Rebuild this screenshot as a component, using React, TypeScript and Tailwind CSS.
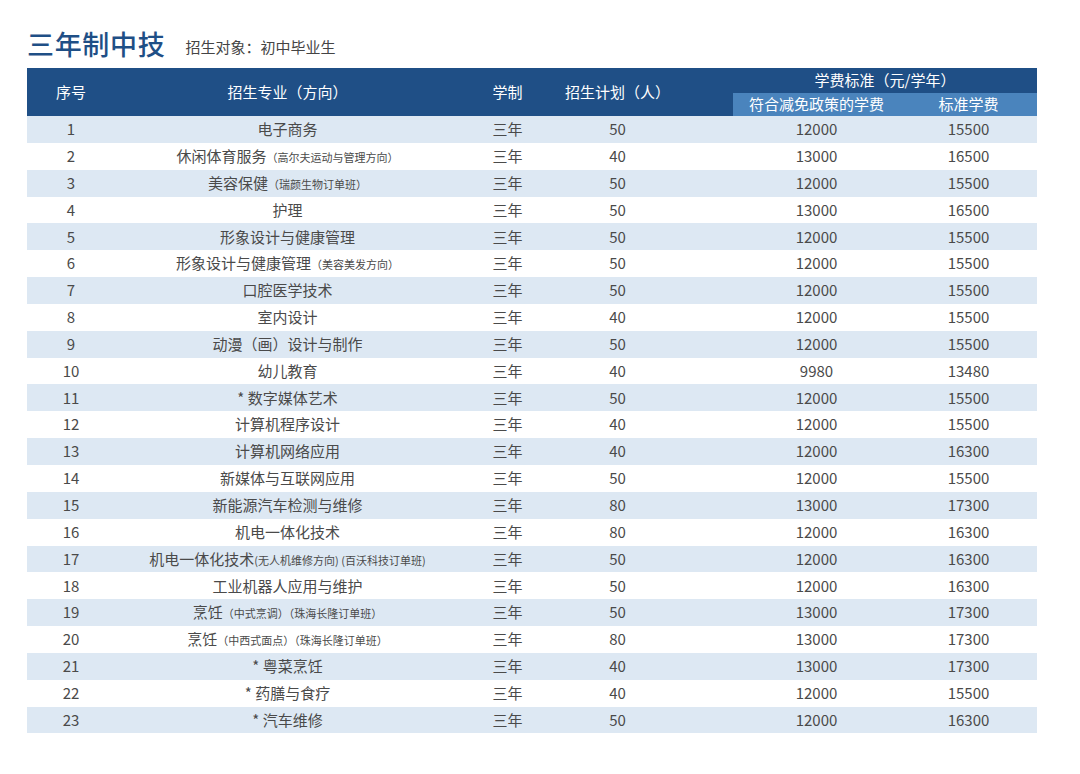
const rows: [string, string, string, string, string][] = [
  ['电子商务', '', '50', '12000', '15500'],
  ['休闲体育服务', '（高尔夫运动与管理方向）', '40', '13000', '16500'],
  ['美容保健', '（瑞颜生物订单班）', '50', '12000', '15500'],
  ['护理', '', '50', '13000', '16500'],
  ['形象设计与健康管理', '', '50', '12000', '15500'],
  ['形象设计与健康管理', '（美容美发方向）', '50', '12000', '15500'],
  ['口腔医学技术', '', '50', '12000', '15500'],
  ['室内设计', '', '40', '12000', '15500'],
  ['动漫（画）设计与制作', '', '50', '12000', '15500'],
  ['幼儿教育', '', '40', '9980', '13480'],
  ['* 数字媒体艺术', '', '50', '12000', '15500'],
  ['计算机程序设计', '', '40', '12000', '15500'],
  ['计算机网络应用', '', '40', '12000', '16300'],
  ['新媒体与互联网应用', '', '50', '12000', '15500'],
  ['新能源汽车检测与维修', '', '80', '13000', '17300'],
  ['机电一体化技术', '', '80', '12000', '16300'],
  ['机电一体化技术', '(无人机维修方向) (百沃科技订单班)', '50', '12000', '16300'],
  ['工业机器人应用与维护', '', '50', '12000', '16300'],
  ['烹饪', '（中式烹调）（珠海长隆订单班）', '50', '13000', '17300'],
  ['烹饪', '（中西式面点）（珠海长隆订单班）', '80', '13000', '17300'],
  ['* 粤菜烹饪', '', '40', '13000', '17300'],
  ['* 药膳与食疗', '', '40', '12000', '15500'],
  ['* 汽车维修', '', '50', '12000', '16300'],
]

const font = { fontFamily: '"Noto Sans CJK SC", "Noto Sans", sans-serif' }

export default function App() {
  return (
    <div className="w-[1080px] h-[774px] bg-white text-[#4a4a4a]" style={font}>
      <div className="flex items-end gap-5 pl-[27px] pt-[14px] h-[62px]">
        <span className="text-[27px] leading-[36px] font-medium text-[#1f4f86] tracking-wide">三年制中技</span>
        <span className="text-[15px] leading-[30px] text-[#444]">招生对象：初中毕业生</span>
      </div>
      <div className="ml-[27px] mt-[6px] w-[1010px]">
        <div className="flex h-[48px] bg-[#1f4f86] text-white text-[15px]">
          <div className="w-[88px] flex items-center justify-center">序号</div>
          <div className="w-[345px] flex items-center justify-center">招生专业（方向）</div>
          <div className="w-[95px] flex items-center justify-center">学制</div>
          <div className="w-[125px] flex items-center justify-center">招生计划（人）</div>
          <div className="w-[357px] flex flex-col">
            <div className="h-[25px] flex items-center justify-center pl-[53px]">学费标准（元/学年）</div>
            <div className="flex h-[23px]">
              <div className="w-[53px]" />
              <div className="w-[167px] bg-[#4a84bd] flex items-center justify-center">符合减免政策的学费</div>
              <div className="w-[137px] bg-[#4a84bd] flex items-center justify-center">标准学费</div>
            </div>
          </div>
        </div>
        {rows.map((r, i) => (
          <div key={i} className={`flex h-[26.85px] items-center text-[15px] ${i % 2 === 0 ? 'bg-[#dde8f3]' : 'bg-white'}`}>
            <div className="w-[88px] text-center">{i + 1}</div>
            <div className="w-[345px] text-center whitespace-nowrap">
              {r[0]}
              {r[1] && <span className="text-[11px]">{r[1]}</span>}
            </div>
            <div className="w-[95px] text-center">三年</div>
            <div className="w-[125px] text-center">{r[2]}</div>
            <div className="w-[53px]" />
            <div className="w-[167px] text-center">{r[3]}</div>
            <div className="w-[137px] text-center">{r[4]}</div>
          </div>
        ))}
      </div>
    </div>
  )
}
